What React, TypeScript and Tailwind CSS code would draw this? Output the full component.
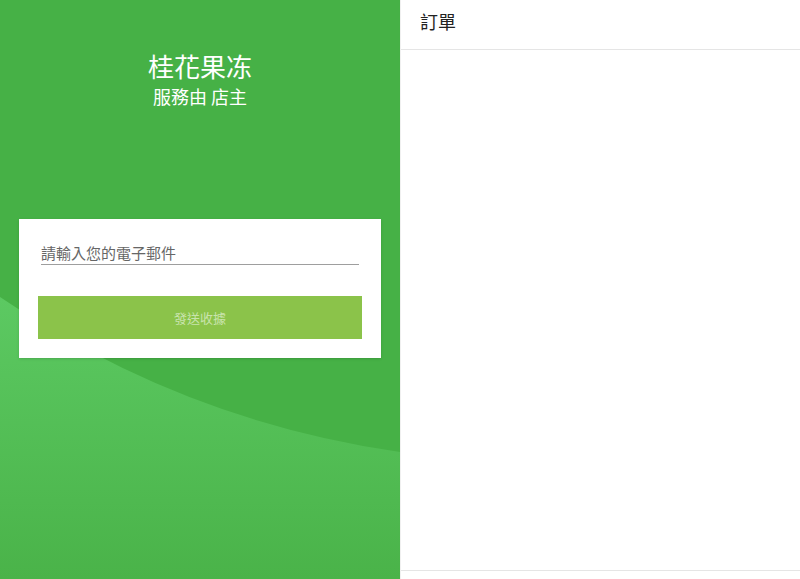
import React from 'react';

const App: React.FC = () => {
  return (
    <div
      className="flex w-[800px] h-[579px] overflow-hidden bg-white"
      style={{ fontFamily: '"Noto Sans CJK TC", "Noto Sans", sans-serif' }}
    >
      {/* left side */}
      <div className="relative w-[400px] h-full bg-[#46b146] overflow-hidden">
        <svg className="absolute inset-0" width="400" height="579" viewBox="0 0 400 579">
          <defs>
            <linearGradient id="lg" x1="0" y1="0" x2="0" y2="1">
              <stop offset="0" stopColor="#5cc962" />
              <stop offset="1" stopColor="#4ab349" />
            </linearGradient>
          </defs>
          <path d="M0,297 Q180,420 400,452 L400,579 L0,579 Z" fill="url(#lg)" />
        </svg>

        <div className="relative flex flex-col items-center pt-[47px] text-white">
          <h1 className="text-[26px] leading-[38px]">桂花果冻</h1>
          <p className="text-[18px] leading-[24px] mt-[-1px]">服務由 店主</p>
        </div>

        <div className="relative mx-[19px] mt-[111px] bg-white pt-[23px] pb-[19px] shadow-sm">
          <div className="mx-[22px] border-b border-[#9e9e9e] text-[15px] leading-[22px] text-[#666]">
            請輸入您的電子郵件
          </div>
          <button className="mt-[31px] ml-[19px] w-[324px] h-[43px] bg-[#8bc34a] text-[13px] text-[#c9e3ad]">
            發送收據
          </button>
        </div>
      </div>

      {/* right side */}
      <div className="flex flex-col w-[400px] h-full border-l border-[#f0f0f0]">
        <div className="h-[50px] border-b border-[#e5e5e5] pl-[19px] pb-[6px] flex items-center">
          <span className="text-[18px] text-[#222]">訂單</span>
        </div>
        <div className="flex-1" />
        <div className="h-[9px] border-t border-[#e5e5e5]" />
      </div>
    </div>
  );
};

export default App;
